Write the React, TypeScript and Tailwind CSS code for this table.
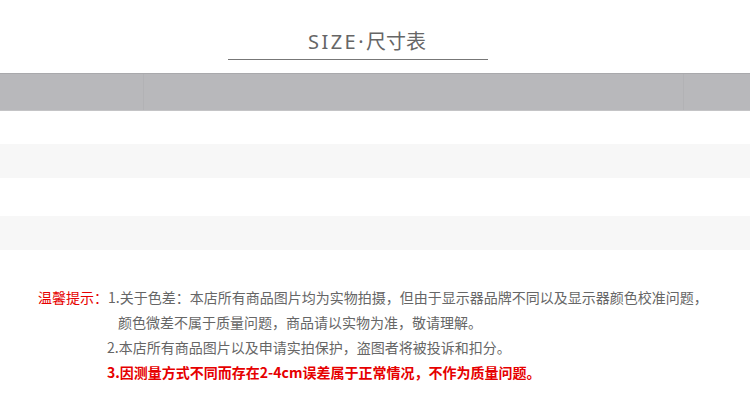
import React from 'react';

export default function App() {
  return (
    <div className="w-[750px] h-[419px] bg-white overflow-hidden text-[#666]" style={{ fontFamily: '"Noto Sans CJK SC", "Noto Sans", sans-serif' }}>
      {/* title */}
      <div className="pt-[27px] ml-[228px] w-[260px]">
        <div className="text-center pl-[18px] text-[20px] leading-[28px] text-[#666]">
          <span className="font-['Noto_Sans',sans-serif] tracking-[2.5px]">SIZE·</span>尺寸表
        </div>
        <div className="mt-[3px] h-px bg-[#777]" />
      </div>

      {/* size table */}
      <div className="mt-[13px]">
        <div className="h-[38px] bg-[#b8b8bb] border-t border-[#a9a9ac] border-b border-b-[#c4c4c6] flex">
          <div className="w-[144px] border-r border-[#b2b2b5]" />
          <div className="flex-1 border-r border-[#b2b2b5]" />
          <div className="w-[66px]" />
        </div>
        <div className="h-[33px] bg-white" />
        <div className="h-[34px] bg-[#f7f7f7]" />
        <div className="h-[38px] bg-white" />
        <div className="h-[34px] bg-[#f7f7f7]" />
      </div>

      {/* notes */}
      <div className="mt-[35px] flex text-[14px] leading-[25px]">
        <div className="w-[108px] pl-[38px] text-[#e60000]">温馨提示：</div>
        <div className="flex flex-col">
          <div>1.关于色差：本店所有商品图片均为实物拍摄，但由于显示器品牌不同以及显示器颜色校准问题，</div>
          <div className="pl-[10px]">颜色微差不属于质量问题，商品请以实物为准，敬请理解。</div>
          <div className="-ml-px">2.本店所有商品图片以及申请实拍保护，盗图者将被投诉和扣分。</div>
          <div className="-ml-px text-[#e60000] font-bold">3.因测量方式不同而存在2-4cm误差属于正常情况，不作为质量问题。</div>
        </div>
      </div>
    </div>
  );
}
